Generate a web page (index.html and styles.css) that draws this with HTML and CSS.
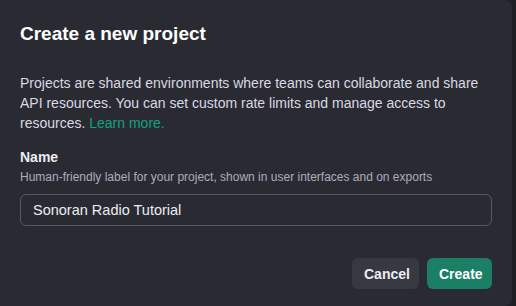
FILE: index.html
```html
<!DOCTYPE html>
<html lang="en">
<head>
	<meta charset="UTF-8">
	<title>Create a new project</title>
<link rel="stylesheet" href="styles.css">
</head>
<body>
	<div class="modal">
		<h2 class="title">Create a new project</h2>
		<p class="desc">Projects are shared environments where teams can collaborate and share API resources. You can set custom rate limits and manage access to resources. <a href="#" class="link">Learn more.</a></p>
		<div class="field">
			<label class="label" for="name">Name</label>
			<div class="hint">Human-friendly label for your project, shown in user interfaces and on exports</div>
			<input class="input" id="name" type="text" value="Sonoran Radio Tutorial">
		</div>
		<div class="actions">
			<button class="btn cancel">Cancel</button>
			<button class="btn create">Create</button>
		</div>
	</div>
</body>
</html>
```

FILE: styles.css
```css
body{
	margin: 0;
	background: #1e1f24;
	font-family: "Liberation Sans", Arial, sans-serif;
	color: #ececf1;
}
.modal{
	width: 512px;
	height: 306px;
	box-sizing: border-box;
	background: #2a2b32;
	border-radius: 0 8px 8px 0;
	padding: 22px 20px 0 20px;
}
.title{
	margin: 0;
	font-size: 19px;
	font-weight: bold;
	line-height: 24px;
	color: #fff;
}
.desc{
	margin: 27px 0 0 0;
	font-size: 14px;
	line-height: 20px;
	color: #d9d9e3;
}
.link{
	color: #10a37f;
	text-decoration: none;
}
.field{
	margin-top: 15px;
}
.label{
	display: block;
	font-size: 14px;
	font-weight: bold;
	line-height: 18px;
	color: #ececf1;
}
.hint{
	font-size: 12px;
	line-height: 16px;
	color: #acacbe;
	margin-top: 3px;
}
.input{
	display: block;
	width: 100%;
	box-sizing: border-box;
	height: 32px;
	margin-top: 9px;
	padding: 0 12px;
	background: transparent;
	border: 1px solid #565869;
	border-radius: 6px;
	font-family: inherit;
	font-size: 14.5px;
	color: #ececf1;
	outline: none;
}
.actions{
	display: flex;
	justify-content: flex-end;
	gap: 8px;
	margin-top: 32px;
}
.btn{
	height: 31px;
	padding: 0 12px;
	border: none;
	border-radius: 6px;
	font-family: inherit;
	font-size: 14px;
	font-weight: bold;
	color: #ececf1;
}
.cancel{
	background: #373842;
	width: 67px;
}
.create{
	background: #1a7f64;
	color: #fff;
	width: 65px;
}
```
